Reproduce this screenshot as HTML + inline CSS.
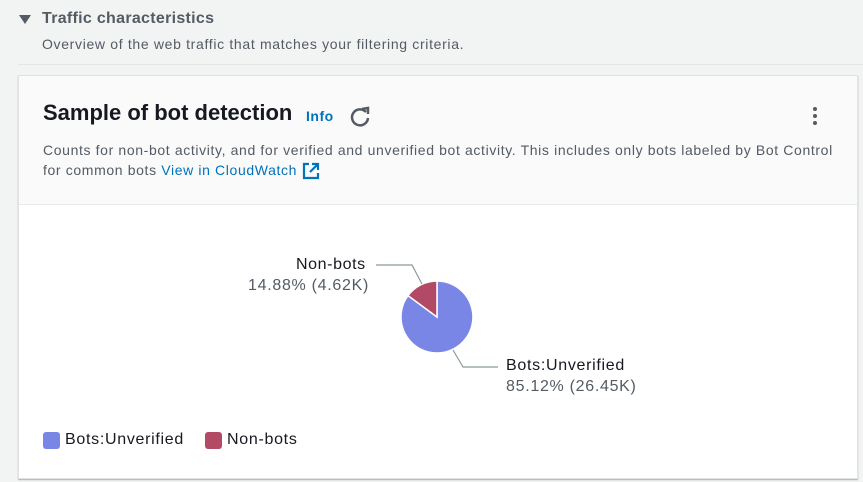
<!DOCTYPE html>
<html><head><meta charset="utf-8"><style>
*{margin:0;padding:0;box-sizing:border-box}
body{width:863px;height:482px;background:#f2f3f3;font-family:"Liberation Sans",sans-serif;position:relative;overflow:hidden;color:#16191f}
.abs{position:absolute;white-space:nowrap}
.card{position:absolute;left:18px;top:75px;width:840px;height:404px;background:#fff;border:1px solid #e1e3e3;box-shadow:0 1px 1px rgba(0,28,36,.3)}
.hdr{position:absolute;left:0;top:0;right:0;height:129px;background:#fafafa;border-bottom:1px solid #e9ebed}
a{color:#0073bb;text-decoration:none}
.l{font-size:16px;letter-spacing:0.7px}
</style></head><body>
<svg class="abs" style="left:18px;top:14px" width="14" height="12"><path d="M1 1 L13 1 L7 10 Z" fill="#545b64"/></svg>
<div class="abs" style="left:42px;top:10px;font-size:16px;font-weight:bold;color:#545b64;letter-spacing:0.3px">Traffic characteristics</div>
<div class="abs" style="left:42px;top:36px;font-size:14px;color:#545b64;letter-spacing:0.67px">Overview of the web traffic that matches your filtering criteria.</div>
<div class="abs" style="left:18px;top:64px;width:845px;height:1px;background:#e4e6e6"></div>
<div class="card">
 <div class="hdr">
  <div class="abs" style="left:24px;top:24px;font-size:22px;font-weight:bold;color:#16191f">Sample of bot detection</div>
  <div class="abs" style="left:287px;top:32px;font-size:14px;font-weight:bold;color:#0073bb;letter-spacing:0.5px">Info</div>
  <svg class="abs" style="left:330px;top:30px" width="22" height="22" viewBox="0 0 22 22"><path d="M17 6 A8 8 0 1 0 19 12" fill="none" stroke="#545b64" stroke-width="2.5"/><path d="M13 3 L19 2 L19 8" fill="none" stroke="#545b64" stroke-width="2.5"/></svg>
  <svg class="abs" style="left:793px;top:30px" width="6" height="20"><circle cx="3" cy="3" r="2" fill="#545b64"/><circle cx="3" cy="10" r="2" fill="#545b64"/><circle cx="3" cy="17" r="2" fill="#545b64"/></svg>
  <div class="abs" style="left:24px;top:64px;font-size:14px;line-height:20px;color:#545b64;letter-spacing:0.63px">Counts for non-bot activity, and for verified and unverified bot activity. This includes only bots labeled by Bot Control<br>for common bots <a>View in CloudWatch</a></div>
  <svg class="abs" style="left:283px;top:86px" width="18" height="18" viewBox="0 0 18 18"><path d="M7 2 H2 V16 H16 V11" fill="none" stroke="#0073bb" stroke-width="2.2"/><path d="M10 2 H16 V8 M16 2 L8 10" fill="none" stroke="#0073bb" stroke-width="2.2"/></svg>
 </div>
</div>
<svg class="abs" style="left:0;top:0" width="863" height="482">
 <path d="M437 317 L437 281 A36 36 0 1 1 408 295.6 Z" fill="#7986e5" stroke="#fff" stroke-width="1.5"/>
 <path d="M437 317 L408 295.6 A36 36 0 0 1 437 281 Z" fill="#b24a66" stroke="#fff" stroke-width="1.5"/>
 <path d="M376 265 L412 265 L422 284" fill="none" stroke="#8d9999" stroke-width="1.2"/>
 <path d="M453 350 L463 367 L498 367" fill="none" stroke="#8d9999" stroke-width="1.2"/>
</svg>
<div class="abs l" style="left:296px;top:256px;color:#16191f;letter-spacing:0.6px">Non-bots</div>
<div class="abs l" style="left:248px;top:277px;color:#545b64">14.88% (4.62K)</div>
<div class="abs l" style="left:506px;top:357px;color:#16191f">Bots:Unverified</div>
<div class="abs l" style="left:506px;top:378px;color:#545b64">85.12% (26.45K)</div>
<div class="abs" style="left:43px;top:432px;width:17px;height:17px;border-radius:3px;background:#7986e5"></div>
<div class="abs l" style="left:65px;top:431px">Bots:Unverified</div>
<div class="abs" style="left:205px;top:432px;width:17px;height:17px;border-radius:3px;background:#b24a66"></div>
<div class="abs l" style="left:227px;top:431px">Non-bots</div>
</body></html>
